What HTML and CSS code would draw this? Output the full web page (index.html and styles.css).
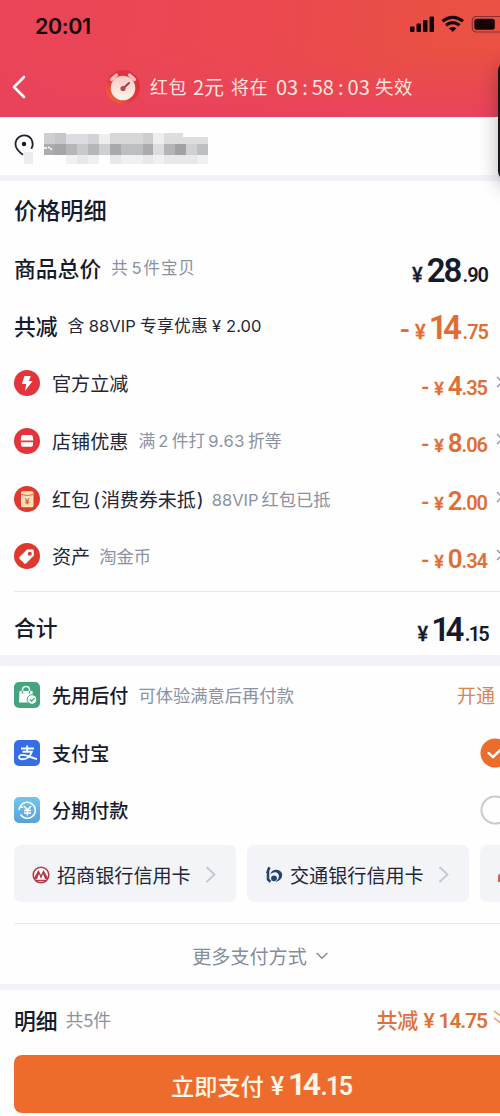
FILE: index.html
```html
<!DOCTYPE html>
<html lang="zh-CN">
<head>
<meta charset="utf-8">
<title>价格明细</title>
<link rel="stylesheet" href="styles.css">
</head>
<body>
<div class="screen">
  <header class="header">
    <div class="status">
      <span class="clock">20:01</span>
      <svg class="signals" width="92" height="20" viewBox="0 0 92 20">
        <rect x="2" y="11.500" width="4.500" height="5.500" rx="1"/><rect x="8.500" y="8.500" width="4.500" height="8.500" rx="1"/><rect x="15" y="5" width="4.500" height="12" rx="1"/><rect x="21.500" y="1.500" width="4.500" height="15.500" rx="1"/>
        <g fill="none" stroke="#160507" stroke-width="3"><path d="M34.500 6.300Q44.700-1.700 55 6.300"/><path d="M38 10.200Q44.700 5 51.500 10.200"/></g><path d="M41 13.200Q44.700 10.600 48.500 13.200L44.700 17z"/>
        <rect x="64.300" y="1.500" width="32" height="15.500" rx="4" fill="none" stroke="#8c2e2c" stroke-width="1.200"/><rect x="66.300" y="3.700" width="20.500" height="11" rx="2.500"/>
      </svg>
    </div>
    <div class="notice">
      <svg class="back" width="14" height="24" viewBox="0 0 14 24"><path d="M12 2L2 12L12 22" fill="none" stroke="#fff" stroke-width="2.600" stroke-linecap="round" stroke-linejoin="round"/></svg>
      <svg class="alarm" width="36" height="36" viewBox="0 0 36 36">
        <defs><linearGradient id="rim" x1="1" y1="0" x2="0" y2="1"><stop offset="0" stop-color="#d82c40"/><stop offset=".6" stop-color="#e4393c"/><stop offset="1" stop-color="#f47a30"/></linearGradient><linearGradient id="dial" x1="0" y1="0" x2="0" y2="1"><stop offset="0" stop-color="#f9c9c4"/><stop offset="1" stop-color="#fff4ef"/></linearGradient></defs>
        <circle cx="18" cy="18" r="17" fill="url(#rim)"/><circle cx="18" cy="19" r="12.300" fill="url(#dial)"/>
        <path d="M6.500 10.500L11.500 6M24.500 6L29.500 10.500" stroke="#fbc5bd" stroke-width="3.200" stroke-linecap="round"/><path d="M18 19.500L24 14" stroke="#a83c3e" stroke-width="2" stroke-linecap="round"/><circle cx="18" cy="19.500" r="2.600" fill="#b5484a"/>
      </svg>
      <span class="n1">红包</span><span class="n2">2元</span><span class="n3">将在</span><span class="n4">03<u>:</u>58<u>:</u>03</span><span class="n5">失效</span>
    </div>
  </header>

  <div class="address">
    <svg width="220" height="36" viewBox="0 0 220 36">
      <path d="M9 21.800C4.500 18.500 1.500 15 1.500 11.200a8.600 8.600 0 1 1 15.800 4.500" fill="none" stroke="#222530" stroke-width="1.800"/><circle cx="10" cy="11" r="2.200" fill="#151820"/><rect x="10" y="19" width="9" height="12" fill="#ececee"/>
      <g shape-rendering="crispEdges">
        <path fill="#cfcfd1" d="M30-1h11v12h-11z"/><path fill="#c6c7ca" d="M41-1h11v12h-11z"/><path fill="#dcdde0" d="M52 1h22v10h-22z"/><path fill="#d2d3d6" d="M74 1h11v10h-11z"/><path fill="#eeeeef" d="M85 1h11v10h-11z"/><path fill="#d6d7d9" d="M96-1h33v12h-33z"/><path fill="#cccdcf" d="M129-1h10v12h-10z"/><path fill="#eeeeef" d="M139 0h11v11h-11z"/><path fill="#dcdddd" d="M150-1h19v5h25v7h-44z"/>
        <path fill="#acacaf" d="M30 11h11v11h-11z"/><path fill="#a5a5a9" d="M41 11h11v11h-11z"/><path fill="#b6b6b9" d="M52 11h11v11h-11z"/><path fill="#c8c9cc" d="M63 11h11v11h-11z"/><path fill="#b5b6b9" d="M74 11h11v11h-11z"/><path fill="#cecfd2" d="M85 11h11v11h-11z"/><path fill="#a8a9ac" d="M96 11h11v11h-11z"/><path fill="#bdbec1" d="M107 11h22v11h-22z"/><path fill="#a9aaae" d="M129 11h10v11h-10z"/><path fill="#dcdcdf" d="M139 11h11v11h-11z"/><path fill="#b3b4b7" d="M150 11h11v11h-11z"/><path fill="#a0a0a6" d="M161 11h11v11h-11z"/><path fill="#cfd0d2" d="M172 11h11v11h-11z"/><path fill="#bebfc2" d="M183 11h11v11h-11z"/>
        <path fill="#f0f0f1" d="M52 22h11v9h-11zM74 22h11v9h-11zM107 22h22v9h-22zM139 22h11v9h-11zM183 22h11v9h-11z"/><path fill="#e8e8ea" d="M63 22h11v9h-11zM96 22h11v9h-11zM129 22h10v9h-10zM150 22h33v9h-33z"/>
      </g>
      <path d="M30 15h3M34 14.500h2M36 16h2" stroke="#fff" stroke-width="1.500"/>
    </svg>
  </div>

  <section class="prices">
    <h1 class="row title">价格明细</h1>
    <div class="row"><b class="head">商品总价</b><span class="sub s1">共<u>5</u>件宝贝</span><span class="price big dark"><i>¥</i><b>28</b><em>.90</em></span></div>
    <div class="row"><b class="head">共减</b><span class="sub s2">含<u>88VIP</u>专享优惠<u>¥ 2.00</u></span><span class="price big"><s>-</s><i>¥</i><b class="narrow">14</b><em>.75</em></span></div>
    <div class="row"><svg class="icon" viewBox="0 0 26 26"><circle cx="13" cy="13" r="13" fill="#e3343e"/><path d="M10.500 6h6.300l-2 5h3.800l-7.600 10 1.200-7H7.800z" fill="#fff"/></svg><span class="label">官方立减</span><span class="price"><s>-</s><i>¥</i><b>4</b><em>.35</em></span><svg class="edge" width="8" height="12" viewBox="0 0 8 12"><path d="M1 1l5 5-5 5" fill="none" stroke="#9298a4" stroke-width="1.400"/></svg></div>
    <div class="row"><svg class="icon" viewBox="0 0 26 26"><circle cx="13" cy="13" r="13" fill="#e3343e"/><path d="M9 7h8q1.300 0 1.600 1.300l.8 4.200H6.600l.8-4.200Q7.700 7 9 7z" fill="#fff"/><path d="M7 13.800q1.500 1.300 3 0 1.500 1.300 3 0 1.500 1.300 3 0 1.500 1.300 3 0V17q0 1.800-1.800 1.800H8.800Q7 18.800 7 17z" fill="#fff"/></svg><span class="label">店铺优惠</span><span class="sub s3">满<u>2</u>件打<u>9.63</u>折等</span><span class="price"><s>-</s><i>¥</i><b>8</b><em>.06</em></span><svg class="edge" width="8" height="12" viewBox="0 0 8 12"><path d="M1 1l5 5-5 5" fill="none" stroke="#9298a4" stroke-width="1.400"/></svg></div>
    <div class="row"><svg class="icon" viewBox="0 0 26 26"><circle cx="13" cy="13" r="13" fill="#df382f"/><rect x="7" y="5.200" width="12.500" height="16" rx="1.500" fill="#fbdfb4"/><path d="M7 8.500q6.200 2 12.500 0" fill="none" stroke="#e76543"/><path d="M11.200 12.200l2 2.500 2-2.500M13.200 14.500v4M11.200 15h4M11.200 16.800h4" fill="none" stroke="#d94b36"/></svg><span class="label coupon">红包<u>(</u>消费券未抵<u>)</u></span><span class="sub s4"><u>88VIP</u>红包已抵</span><span class="price"><s>-</s><i>¥</i><b>2</b><em>.00</em></span><svg class="edge" width="8" height="12" viewBox="0 0 8 12"><path d="M1 1l5 5-5 5" fill="none" stroke="#9298a4" stroke-width="1.400"/></svg></div>
    <div class="row"><svg class="icon" viewBox="0 0 26 26"><circle cx="13" cy="13" r="13" fill="#df382f"/><path d="M13 6.500l5-.2q1.700 0 1.800 1.600l.1 4.700-7.600 7.600q-1.100 1-2.200 0l-4.400-4.300q-1.100-1.100 0-2.200z" fill="#fff"/><circle cx="15.800" cy="10.800" r="2" fill="#df382f"/></svg><span class="label">资产</span><span class="sub s5">淘金币</span><span class="price"><s>-</s><i>¥</i><b>0</b><em>.34</em></span><svg class="edge" width="8" height="12" viewBox="0 0 8 12"><path d="M1 1l5 5-5 5" fill="none" stroke="#9298a4" stroke-width="1.400"/></svg></div>
    <div class="row sum"><b class="head">合计</b><span class="price big dark"><i>¥</i><b class="narrow">14</b><em class="narrow">.15</em></span></div>
  </section>

  <section class="payments">
    <div class="row"><svg class="icon" viewBox="0 0 26 26"><rect width="26" height="26" rx="5" fill="#45a47d"/><path d="M5.500 9h13l.8 11.500H5z" fill="#fff"/><path d="M8.500 11V8q0-3.500 3.500-3.500T15.500 8v3" fill="none" stroke="#e2f6ed" stroke-width="1.600"/><path d="M8.500 9v2.500M15.500 9v2.500" stroke="#45a47d" stroke-width="1.300"/><circle cx="18" cy="17.500" r="4.800" fill="#f5fffa" stroke="#45a47d"/><path d="M15.800 17.500l1.800 1.600 3-3" fill="none" stroke="#45a47d" stroke-width="1.300"/></svg><span class="label strong">先用后付</span><span class="sub s6">可体验满意后再付款</span><span class="open">开通</span></div>
    <div class="row"><svg class="icon" viewBox="0 0 26 26"><rect width="26" height="26" rx="5" fill="#346de6"/><path d="M7 8.500h13M13.200 5.500v6M8.500 11.700h9.300Q15.500 19 8.500 19.300C4 19.300 3.800 15 8 14.900c4.500-.2 8.500 2.500 15 4.300" fill="none" stroke="#f3faff" stroke-width="1.900"/></svg><span class="label strong">支付宝</span><svg class="radio" viewBox="0 0 30 30"><circle cx="15" cy="15" r="14.500" fill="#ec6c2c"/><path d="M8.700 15.200l4.300 4 8-8" fill="none" stroke="#fff" stroke-width="2.500" stroke-linecap="round" stroke-linejoin="round"/></svg></div>
    <div class="row"><svg class="icon" viewBox="0 0 26 26"><defs><linearGradient id="sky" x1="0" y1="0" x2="0" y2="1"><stop offset="0" stop-color="#73c6ef"/><stop offset="1" stop-color="#57a0dc"/></linearGradient></defs><rect width="26" height="26" rx="5" fill="url(#sky)"/><path d="M6 10A8 8 0 1 1 6.500 17.500M5 13l1-3.500 3.200 1" fill="none" stroke="#fff" stroke-width="1.500"/><path d="M10 9l3.400 4L17 9M13.400 13v5.500M10 13.500h7M10 16h7" fill="none" stroke="#fff" stroke-width="1.500"/></svg><span class="label strong">分期付款</span><svg class="radio" viewBox="0 0 30 30"><circle cx="15" cy="15" r="13.500" fill="none" stroke="#c8c9d1" stroke-width="2"/></svg></div>
    <div class="cards">
      <div class="card"><svg width="18" height="18" viewBox="0 0 18 18"><circle cx="9" cy="9" r="7.800" fill="#fff" stroke="#b4394a" stroke-width="1.600"/><path d="M2 12L6.500 4 9 9l2.500-5L16 12v1h-3l-2-5-2 5-2-5-2 5H2z" fill="#b4394a"/><path d="M3 14.500h12" stroke="#b4394a" stroke-width="1.600"/></svg><span>招商银行信用卡</span><svg class="chev" width="11" height="17" viewBox="0 0 11 17"><path d="M1.500 1L9.500 8.500L1.500 16" fill="none" stroke="#c4c6ce" stroke-width="1.800"/></svg></div>
      <div class="card"><svg width="18" height="18" viewBox="0 0 18 18"><path d="M4.800 1.500Q2.500 3.500 3 7v6.500l2.500 2.200" fill="none" stroke="#24446e" stroke-width="2.500"/><path d="M1.200 6.300h2" stroke="#24446e" stroke-width="1.500"/><path d="M5 8.500C7.500 1.500 15.500 3 17 7.500 17.800 12 15 15 10.500 15.800 14 13 14.800 10 13 7.700 10.800 5.200 7 6.500 5 8.500z" fill="#24446e"/><circle cx="9" cy="12.300" r="2.900" fill="#24446e"/></svg><span>交通银行信用卡</span><svg class="chev" width="11" height="17" viewBox="0 0 11 17"><path d="M1.500 1L9.500 8.500L1.500 16" fill="none" stroke="#c4c6ce" stroke-width="1.800"/></svg></div>
      <div class="card"><svg width="18" height="18" viewBox="0 0 18 18"><path d="M7 9H2q-1 0-1 1v5h6M1 12h6" fill="none" stroke="#d05454" stroke-width="1.800"/></svg></div>
    </div>
    <div class="more"><span>更多支付方式</span><svg width="12" height="8" viewBox="0 0 12 8"><path d="M.7 1L6 6.300L11.300 1" fill="none" stroke="#858c9d" stroke-width="1.500"/></svg></div>
  </section>

  <footer class="footer">
    <div class="detail"><b class="head">明细</b><span class="count">共5件</span><span class="saved"><b>共减</b><i>¥</i><em>14.75</em></span><svg width="14" height="20" viewBox="0 0 14 20"><path d="M1 2l12 9M1 9l12 9" fill="none" stroke="#ee9a6c" stroke-width="1.500"/></svg></div>
    <div class="pay"><span>立即支付</span><i>¥</i><b>14</b><em>.15</em></div>
  </footer>
  <div class="floating"></div>
</div>
</body>
</html>
```
FILE: styles.css
```css
* { box-sizing: border-box; }
body { margin: 0; background: #fff; }
.screen { position: relative; width: 500px; height: 1116px; overflow: hidden; background: #fefefe; color: #151a2c; font-family: Inter, "Noto Sans CJK SC", sans-serif; }
i, em { font-style: normal; }
s, u { text-decoration: none; }
svg { display: block; flex: none; }

.header { height: 117px; background: linear-gradient(to bottom, rgba(233,67,94,0) 45%, #e9435c 100%), linear-gradient(100deg, #ea4459 0%, #eb4850 50%, #ea5044 85%); }
.status { display: flex; justify-content: space-between; height: 52px; padding: 0 0 0 35px; align-items: center; color: #160507; }
.clock { font-size: 21.5px; font-weight: 600; letter-spacing: -.4px; }
.signals { fill: #160507; margin-top: -2px; }
.notice { display: flex; align-items: center; height: 70px; padding-left: 12px; color: #ffe4df; font-size: 18px; white-space: nowrap; font-family: "Noto Sans CJK SC", sans-serif; }
.notice span { margin-top: -2px; }
.alarm { margin: 0 9px 0 79px; }
.n1 { letter-spacing: .6px; width: 43px; }
.n2 { font-size: 20px; width: 38px; }
.n3 { width: 45px; letter-spacing: .6px; }
.n4 { font-size: 20px; width: 99px; }
.n4 u { margin: 0 4px; }
.n5 { font-size: 18.5px; letter-spacing: .5px; }

.address { height: 64px; padding: 16px 0 0 14px; border-bottom: 6px solid #f1f3f8; }
.row { display: flex; align-items: center; height: 57.75px; margin: 0; padding-left: 14px; white-space: nowrap; }
.title, .head { font-weight: 500; }
.title { font-size: 23.2px; padding-bottom: 2px; }
.head { font-size: 21.8px; }
.icon { width: 26px; height: 26px; margin-right: 12px; }
.label { font-size: 19.1px; color: #222738; }
.strong { font-weight: 500; color: #151a2c; }
.sub { margin-left: 10px; color: #8a91a1; font-size: 17.3px; padding-bottom: 1px; }
.s1 { font-size: 16.5px; letter-spacing: .9px; }
.s1 u { margin: 0 1px 0 3px; }
.s2 { color: #222738; font-size: 16.8px; letter-spacing: .25px; }
.s2 u { margin: 0 4px; font-size: 16.5px; letter-spacing: .1px; }
.s3 { font-size: 16.8px; }
.s3 u { margin: 0 3px; letter-spacing: .5px; font-size: 16.5px; }
.s4 u { margin-right: 3px; font-size: 16.5px; }
.s5 { margin-left: 9px; }
.coupon { letter-spacing: -.1px; }
.coupon u { margin: 0 1px 0 3px; }
.coupon u:last-child { margin: 0 -2px 0 1px; }

.price { display: flex; align-items: baseline; margin-left: auto; margin-right: 13px; padding-top: 5px; color: #e06e34; font-family: Roboto, sans-serif; font-weight: 600; line-height: 1; }
.price s { font-size: 22px; margin-right: 5px; }
.price i { font-size: 18px; margin-right: 4px; font-weight: 500; -webkit-text-stroke: .3px; }
.price b { font-size: 26px; font-weight: 600; letter-spacing: -1.2px; }
.price em { font-size: 20px; letter-spacing: -1px; margin-right: -1px; }
.price.big b { font-size: 33px; letter-spacing: -2px; }
.price.big b.narrow { letter-spacing: -4.5px; margin-left: -1px; margin-right: 3px; }
.price.big em { font-size: 20px; margin-left: 2px; }
.price em.narrow { letter-spacing: -1.8px; }
.price.big s { font-size: 28px; margin-right: 5px; }
.price.big i { font-size: 20px; }
.dark.price { color: #151a2c; }
.edge { margin: -3px -4px 0 -3px; }

.sum { height: 63px; margin-left: 14px; padding: 7px 0 0; border-top: 1px solid #e8e9ee; }
.prices { height: 485px; border-bottom: 11px solid #f2f3f7; }
.prices .sum { margin-top: 6px; }
.payments { height: 324px; border-bottom: 6px solid #f2f3f8; }
.open { margin-left: auto; margin-right: 5px; color: #d98252; font-size: 19px; }
.radio { width: 30px; height: 30px; margin-left: auto; margin-right: -10px; }
.cards { display: flex; gap: 11.5px; margin: 6px 0 0 14px; height: 57px; overflow: hidden; }
.card { display: flex; flex: 0 0 221.5px; align-items: center; padding: 2px 20px 0 18px; border-radius: 7px; background: #f2f4f8; font-size: 19.1px; white-space: nowrap; color: #222738; }
.card span { margin-left: 7px; }
.chev { margin-left: auto; }
.more { display: flex; align-items: center; justify-content: center; gap: 9px; margin: 21px 0 0 14px; height: 61px; padding: 3px 0 0; border-top: 1px solid #e8eaee; font-size: 19.1px; color: #858c9d; }
.more svg { margin-right: -6px; }

.detail { display: flex; align-items: center; height: 65px; padding-left: 14px; padding-bottom: 7px; white-space: nowrap; }
.count { margin-left: 8px; color: #8a91a1; font: 17.8px "Noto Sans CJK SC", sans-serif; }
.saved { display: flex; align-items: baseline; margin-left: auto; margin-right: 6px; color: #df7036; }
.saved b { font-size: 21px; font-weight: 500; }
.saved i, .saved em { font-family: Roboto, sans-serif; font-weight: 600; font-size: 21px; }
.saved em { letter-spacing: -1.1px; }
.saved i { margin: 0 4px 0 5px; font-weight: 500; }
.detail svg { margin-right: -7px; }
.pay { display: flex; align-items: baseline; margin-left: 14px; height: 58px; padding-left: 157px; border-radius: 8px 0 0 8px; background: #ed6c2d; color: #fff6e5; font-size: 23.2px; line-height: 58px; white-space: nowrap; }
.pay span { font-weight: 500; }
.pay i, .pay b, .pay em { font-family: Roboto, sans-serif; font-weight: 600; }
.pay i { margin: 0 4px 0 7px; font-size: 25px; font-weight: 500; }
.pay b { font-size: 32px; letter-spacing: -3.5px; }
.pay em { font-size: 25px; letter-spacing: -1.6px; margin-left: 3px; }
.floating { position: absolute; left: 498px; top: 61px; width: 40px; height: 120px; border-radius: 10px; background: #15171b; box-shadow: 0 5px 20px rgba(0,0,0,.28); }
```
